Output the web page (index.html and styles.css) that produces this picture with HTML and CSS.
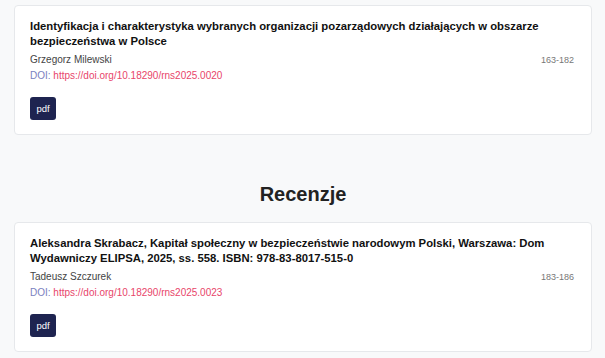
FILE: index.html
```html
<!DOCTYPE html>
<html lang="pl">
<head>
    <meta charset="UTF-8">
    <meta name="viewport" content="width=device-width, initial-scale=1.0">
    <title>Spis treści</title>
    <link rel="stylesheet" href="styles.css">
</head>
<body>
    <div class="container">
        <div class="article-card">
            <h3 class="article-title">Identyfikacja i charakterystyka wybranych organizacji pozarządowych działających w obszarze bezpieczeństwa w Polsce</h3>
            <div class="article-meta">
                <div class="article-info">
                    <div class="article-author">Grzegorz Milewski</div>
                    <div class="article-doi">DOI: <a href="#">https://doi.org/10.18290/rns2025.0020</a></div>
                </div>
                <div class="article-pages">163-182</div>
            </div>
            <a class="pdf-btn" href="#">pdf</a>
        </div>

        <h2 class="section-title">Recenzje</h2>

        <div class="article-card">
            <h3 class="article-title">Aleksandra Skrabacz, Kapitał społeczny w bezpieczeństwie narodowym Polski, Warszawa: Dom Wydawniczy ELIPSA, 2025, ss. 558. ISBN: 978-83-8017-515-0</h3>
            <div class="article-meta">
                <div class="article-info">
                    <div class="article-author">Tadeusz Szczurek</div>
                    <div class="article-doi">DOI: <a href="#">https://doi.org/10.18290/rns2025.0023</a></div>
                </div>
                <div class="article-pages">183-186</div>
            </div>
            <a class="pdf-btn" href="#">pdf</a>
        </div>
    </div>
</body>
</html>
```

FILE: styles.css
```css
body {
    margin: 0;
    padding: 0;
    background-color: #f8f9fa;
    font-family: 'Liberation Sans', Arial, sans-serif;
    color: #212529;
}

.container {
    padding: 5px 13px 0 14px;
}

.article-card {
    background-color: #fff;
    border: 1px solid #e6e8eb;
    border-radius: 4px;
    padding: 13px 15px 14px 15px;
}

.article-title {
    margin: 0 0 3px 0;
    font-size: 11.3px;
    line-height: 15px;
    font-weight: bold;
    color: #111;
    max-width: 530px;
}

.article-meta {
    display: flex;
    justify-content: space-between;
    align-items: flex-start;
    padding-right: 2px;
}

.article-author {
    font-size: 10px;
    line-height: 16px;
    color: #444;
}

.article-doi {
    font-size: 10px;
    line-height: 16px;
    color: #7a7fc0;
}

.article-doi a {
    color: #e8456a;
    text-decoration: none;
}

.article-pages {
    font-size: 9px;
    line-height: 16px;
    color: #777;
}

.pdf-btn {
    display: inline-block;
    margin-top: 13px;
    width: 26px;
    height: 23px;
    line-height: 23px;
    text-align: center;
    background-color: #1e2450;
    color: #fff;
    font-size: 9.5px;
    border-radius: 3px;
    text-decoration: none;
}

.section-title {
    margin: 48px 0 16px 0;
    text-align: center;
    font-size: 20px;
    font-weight: bold;
    color: #222;
}
```
